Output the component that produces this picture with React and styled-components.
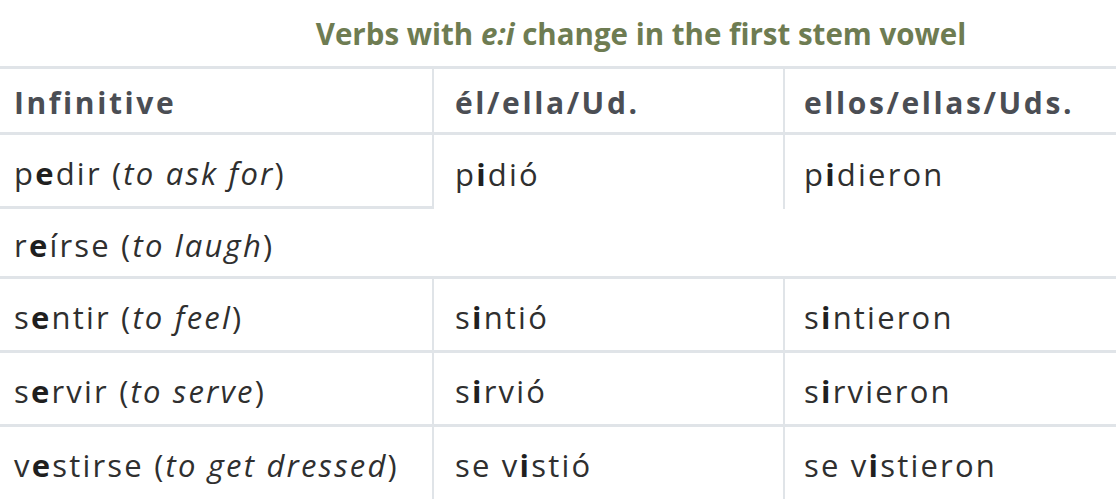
import React from 'react';
import styled, { createGlobalStyle, css } from 'styled-components';

const GlobalStyle = createGlobalStyle`
  html, body {
    margin: 0;
    padding: 0;
    background: #ffffff;
  }
  body {
    font-family: 'Open Sans', 'Liberation Sans', sans-serif;
    font-variant-ligatures: none;
  }
`;

const rows = [
  { inf: [['p'], ['e', 'b'], ['dir ('], ['to ask for', 'i'], [')']], sg: [['p'], ['i', 'b'], ['dió']], pl: [['p'], ['i', 'b'], ['dieron']], h: 74, split: true },
  { inf: [['r'], ['e', 'b'], ['írse ('], ['to laugh', 'i'], [')']], sg: null, pl: null, h: 70, merged: true },
  { inf: [['s'], ['e', 'b'], ['ntir ('], ['to feel', 'i'], [')']], sg: [['s'], ['i', 'b'], ['ntió']], pl: [['s'], ['i', 'b'], ['ntieron']], h: 74 },
  { inf: [['s'], ['e', 'b'], ['rvir ('], ['to serve', 'i'], [')']], sg: [['s'], ['i', 'b'], ['rvió']], pl: [['s'], ['i', 'b'], ['rvieron']], h: 74 },
  { inf: [['v'], ['e', 'b'], ['stirse ('], ['to get dressed', 'i'], [')']], sg: [['se v'], ['i', 'b'], ['stió']], pl: [['se v'], ['i', 'b'], ['stieron']], h: 72, last: true },
];

const Rich = ({ parts }) =>
  parts.map(([text, kind], i) =>
    kind === 'b' ? <Strong key={i}>{text}</Strong> : kind === 'i' ? <Em key={i}>{text}</Em> : <span key={i}>{text}</span>
  );

const App = () => {
  return (
    <>
      <GlobalStyle />
      <Page>
        <Title>
          Verbs with <TitleEm>e:i</TitleEm> change in the first stem vowel
        </Title>
        <Table>
          <Cell $h={66} $bottom>
            <HeadText>Infinitive</HeadText>
          </Cell>
          <Cell $h={66} $bottom $left $pad={21}>
            <HeadText>él/ella/Ud.</HeadText>
          </Cell>
          <Cell $h={66} $bottom $left $pad={19}>
            <HeadText>ellos/ellas/Uds.</HeadText>
          </Cell>

          {rows.map((row, idx) => (
            <React.Fragment key={idx}>
              <Cell $h={row.h} $bottom={!row.last}>
                <BodyText>
                  <Rich parts={row.inf} />
                </BodyText>
              </Cell>
              <Cell $h={row.h} $bottom={!row.last && !row.split} $left={!row.merged} $pad={21}>
                {row.sg && (
                  <BodyText>
                    <Rich parts={row.sg} />
                  </BodyText>
                )}
              </Cell>
              <Cell $h={row.h} $bottom={!row.last && !row.split} $left={!row.merged} $pad={19}>
                {row.pl && (
                  <BodyText>
                    <Rich parts={row.pl} />
                  </BodyText>
                )}
              </Cell>
            </React.Fragment>
          ))}
        </Table>
      </Page>
    </>
  );
};

export default App;

const Page = styled.div`
  width: 1116px;
  height: 504px;
  overflow: hidden;
  background: #ffffff;
`;

const Title = styled.h1`
  margin: 0;
  height: 66px;
  padding-left: 166px;
  box-sizing: border-box;
  display: flex;
  align-items: center;
  justify-content: center;
  font-size: 29.5px;
  font-weight: 700;
  color: #6e7c52;
  white-space: pre;
`;

const TitleEm = styled.em`
  font-style: italic;
`;

const Table = styled.div`
  display: grid;
  grid-template-columns: 432px 351px 1fr;
  border-top: 3px solid #e0e4e8;
`;

const Cell = styled.div`
  height: ${props => props.$h}px;
  box-sizing: border-box;
  display: flex;
  align-items: center;
  padding-left: ${props => props.$pad || 14}px;
  padding-top: 4px;
  ${props =>
    props.$bottom &&
    css`
      border-bottom: 3px solid #e0e4e8;
    `}
  ${props =>
    props.$left &&
    css`
      border-left: 2px solid #e0e4e8;
    `}
`;

const HeadText = styled.span`
  font-size: 30px;
  font-weight: 700;
  letter-spacing: 2.6px;
  color: #4b4e54;
  white-space: nowrap;
`;

const BodyText = styled.span`
  font-size: 31px;
  font-weight: 400;
  letter-spacing: 2.2px;
  color: #2f2f2f;
  white-space: nowrap;
`;

const Strong = styled.b`
  font-weight: 700;
  color: #1f1f1f;
`;

const Em = styled.i`
  font-style: italic;
`;
